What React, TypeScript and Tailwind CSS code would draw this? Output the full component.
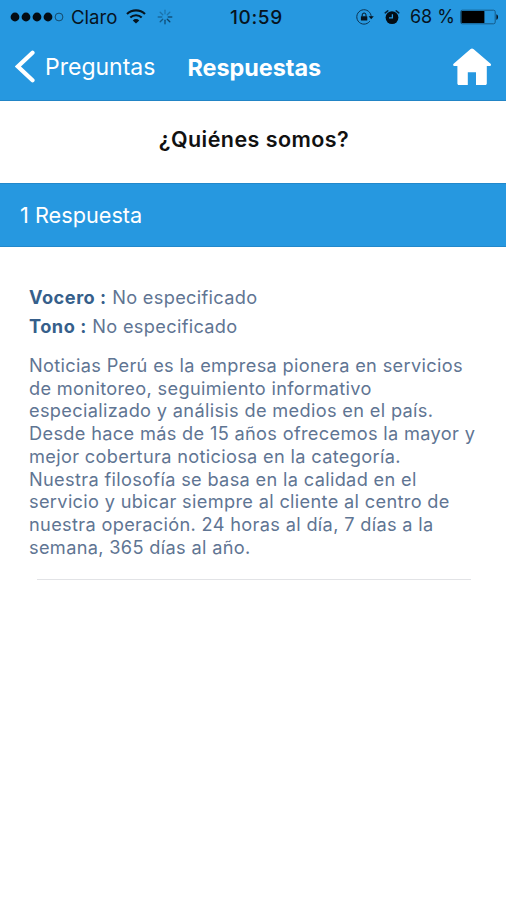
const ANSWER_LINES = [
	'Noticias Perú es la empresa pionera en servicios',
	'de monitoreo, seguimiento informativo',
	'especializado y análisis de medios en el país.',
	'Desde hace más de 15 años ofrecemos la mayor y',
	'mejor cobertura noticiosa en la categoría.',
	'Nuestra filosofía se basa en la calidad en el',
	'servicio y ubicar siempre al cliente al centro de',
	'nuestra operación. 24 horas al día, 7 días a la',
	'semana, 365 días al año.'
];

const DETAILS = [
	{ label: 'Vocero', value: 'No especificado' },
	{ label: 'Tono', value: 'No especificado' }
];

const SPINNER_OPACITY = [0.35, 0.4, 0.75, 0.9, 0.8, 0.65, 0.5, 0.4];

const SignalDots = () => (
	<svg className="h-3 w-[54px]" viewBox="0 0 54 12">
		{[5, 16, 27, 38].map((cx) => (
			<circle key={cx} cx={cx} cy="6" r="4.4" fill="#030d15" />
		))}
		<circle
			cx="49"
			cy="6"
			r="3.9"
			fill="none"
			stroke="#11415f"
			strokeWidth="0.9"
		/>
	</svg>
);

const WifiIcon = () => (
	<svg className="h-4 w-5" viewBox="0 0 20 16" fill="none">
		<path d="M1 5a13 13 0 0 1 18 0" stroke="#06141f" strokeWidth="2.2" />
		<path d="M4.3 8.6a8.2 8.2 0 0 1 11.4 0" stroke="#06141f" strokeWidth="2.1" />
		<path d="M10 14.6 6.8 11.4a4.6 4.6 0 0 1 6.4 0Z" fill="#06141f" />
	</svg>
);

const Spinner = () => (
	<svg className="size-4" viewBox="0 0 16 16">
		{SPINNER_OPACITY.map((opacity, i) => (
			<line
				key={i}
				x1="8"
				y1="1.2"
				x2="8"
				y2="4.8"
				stroke="#0b3a5a"
				strokeLinecap="round"
				strokeWidth="1.3"
				opacity={opacity}
				transform={`rotate(${i * 45} 8 8)`}
			/>
		))}
	</svg>
);

const RotationLockIcon = () => (
	<svg className="h-4 w-[18px]" viewBox="0 0 18 16" fill="none">
		<path
			d="M13.8 12.2A7.2 7.2 0 1 1 15.2 8"
			stroke="#0b3250"
			strokeWidth="1"
		/>
		<path d="M12.6 7.2h5.2L15.2 10.2Z" fill="#06141f" />
		<rect x="4.9" y="7.2" width="6.4" height="4.4" rx="0.5" fill="#06141f" />
		<path
			d="M6.2 7.4V5.9a1.9 1.9 0 0 1 3.8 0v1.5"
			stroke="#06141f"
			strokeWidth="1"
		/>
	</svg>
);

const AlarmIcon = () => (
	<svg className="size-4" viewBox="0 0 16 16" fill="none">
		<circle cx="8" cy="8.6" r="6.4" fill="#030d15" />
		<path
			d="M1.2 3.9 3.8 1.8M14.8 3.9 12.2 1.8"
			stroke="#06243a"
			strokeLinecap="round"
			strokeWidth="1.5"
		/>
		<path d="M5 8.9h3.4V5.2" stroke="#2698e0" strokeWidth="1.3" />
	</svg>
);

const BatteryIcon = () => (
	<svg className="h-4 w-[39px]" viewBox="0 0 39 16" fill="none">
		<rect
			x="0.6"
			y="1.2"
			width="34.6"
			height="13.6"
			rx="1.6"
			stroke="#145a88"
			strokeWidth="1"
		/>
		<rect x="1.4" y="2" width="23" height="12" rx="0.6" fill="#000" />
		<path d="M36.4 5.2c2.2.8 2.2 4.8 0 5.6Z" fill="#06141f" />
	</svg>
);

const BackIcon = () => (
	<svg className="h-9 w-5" viewBox="0 0 20 36" fill="none">
		<path
			d="M17.5 3.8 2.9 17.5l14.6 13.7"
			stroke="#fff"
			strokeLinecap="round"
			strokeLinejoin="miter"
			strokeWidth="4.2"
		/>
	</svg>
);

const HomeIcon = () => (
	<svg className="h-[38px] w-10" viewBox="0 0 40 38" fill="#fff">
		<path d="M18.6 1.1 1.6 15.8c-1 .9-.5 2.2.8 2.2h3v17.6c0 .9.6 1.5 1.5 1.5h8.9V24.2h8.2v12.9h9.3c.9 0 1.5-.6 1.5-1.5V18h3c1.3 0 1.8-1.3.8-2.2L21.4 1.1c-.8-.7-2-.7-2.8 0Z" />
	</svg>
);

const StatusBar = () => (
	<div className="flex h-[34px] items-center text-[19px] leading-none text-[#06141f]">
		<div className="flex w-[230px] items-center pl-2.5">
			<SignalDots />
			<span className="ml-[7px] text-[18.6px]">Claro</span>
			<div className="ml-[9px] flex items-center gap-[11px]">
				<WifiIcon />
				<Spinner />
			</div>
		</div>
		<span className="font-medium tracking-[0.65px]">10:59</span>
		<div className="ml-auto flex items-center pr-[7px]">
			<RotationLockIcon />
			<div className="ml-2.5">
				<AlarmIcon />
			</div>
			<span className="mr-[5px] ml-2.5 text-[18px] whitespace-nowrap">
				68 %
			</span>
			<BatteryIcon />
		</div>
	</div>
);

const NavBar = () => (
	<div className="flex h-[66px] items-center pr-3.5 pl-[15px] text-white">
		<BackIcon />
		<span className="ml-2.5 text-[23px] leading-none">Preguntas</span>
		<h1 className="ml-8 pt-0.5 text-[23.4px] leading-none font-bold">
			Respuestas
		</h1>
		<div className="ml-auto">
			<HomeIcon />
		</div>
	</div>
);

export default function App() {
	return (
		<div className="h-[900px] w-[506px] bg-white font-['Inter','Liberation_Sans',sans-serif]">
			<header className="h-[101px] border-b border-[#2285c6] bg-[#2698e0]">
				<StatusBar />
				<NavBar />
			</header>

			<h2 className="flex h-[82px] items-center justify-center pb-1.5 pl-0.5 text-[21.5px] font-semibold tracking-[0.45px] text-[#111]">
				¿Quiénes somos?
			</h2>

			<div className="flex h-16 items-center border-y border-[#2288cb] bg-[#2698e0] px-5 text-[21.7px] text-white">
				1 Respuesta
			</div>

			<article className="px-[29px] pt-9 text-[18.2px] tracking-[0.33px] text-[#5f7593]">
				{DETAILS.map(({ label, value }) => (
					<p key={label} className="leading-[29px] whitespace-nowrap">
						<b className="font-bold tracking-[0.5px] text-[#365f8b]">
							{label} :
						</b>{' '}
						{value}
					</p>
				))}

				<div className="mt-[13px] leading-[22.7px] whitespace-nowrap">
					{ANSWER_LINES.map((line) => (
						<p key={line}>{line}</p>
					))}
				</div>

				<hr className="mt-[21px] mr-1.5 ml-2 border-[#e2e3e6]" />
			</article>
		</div>
	);
}
